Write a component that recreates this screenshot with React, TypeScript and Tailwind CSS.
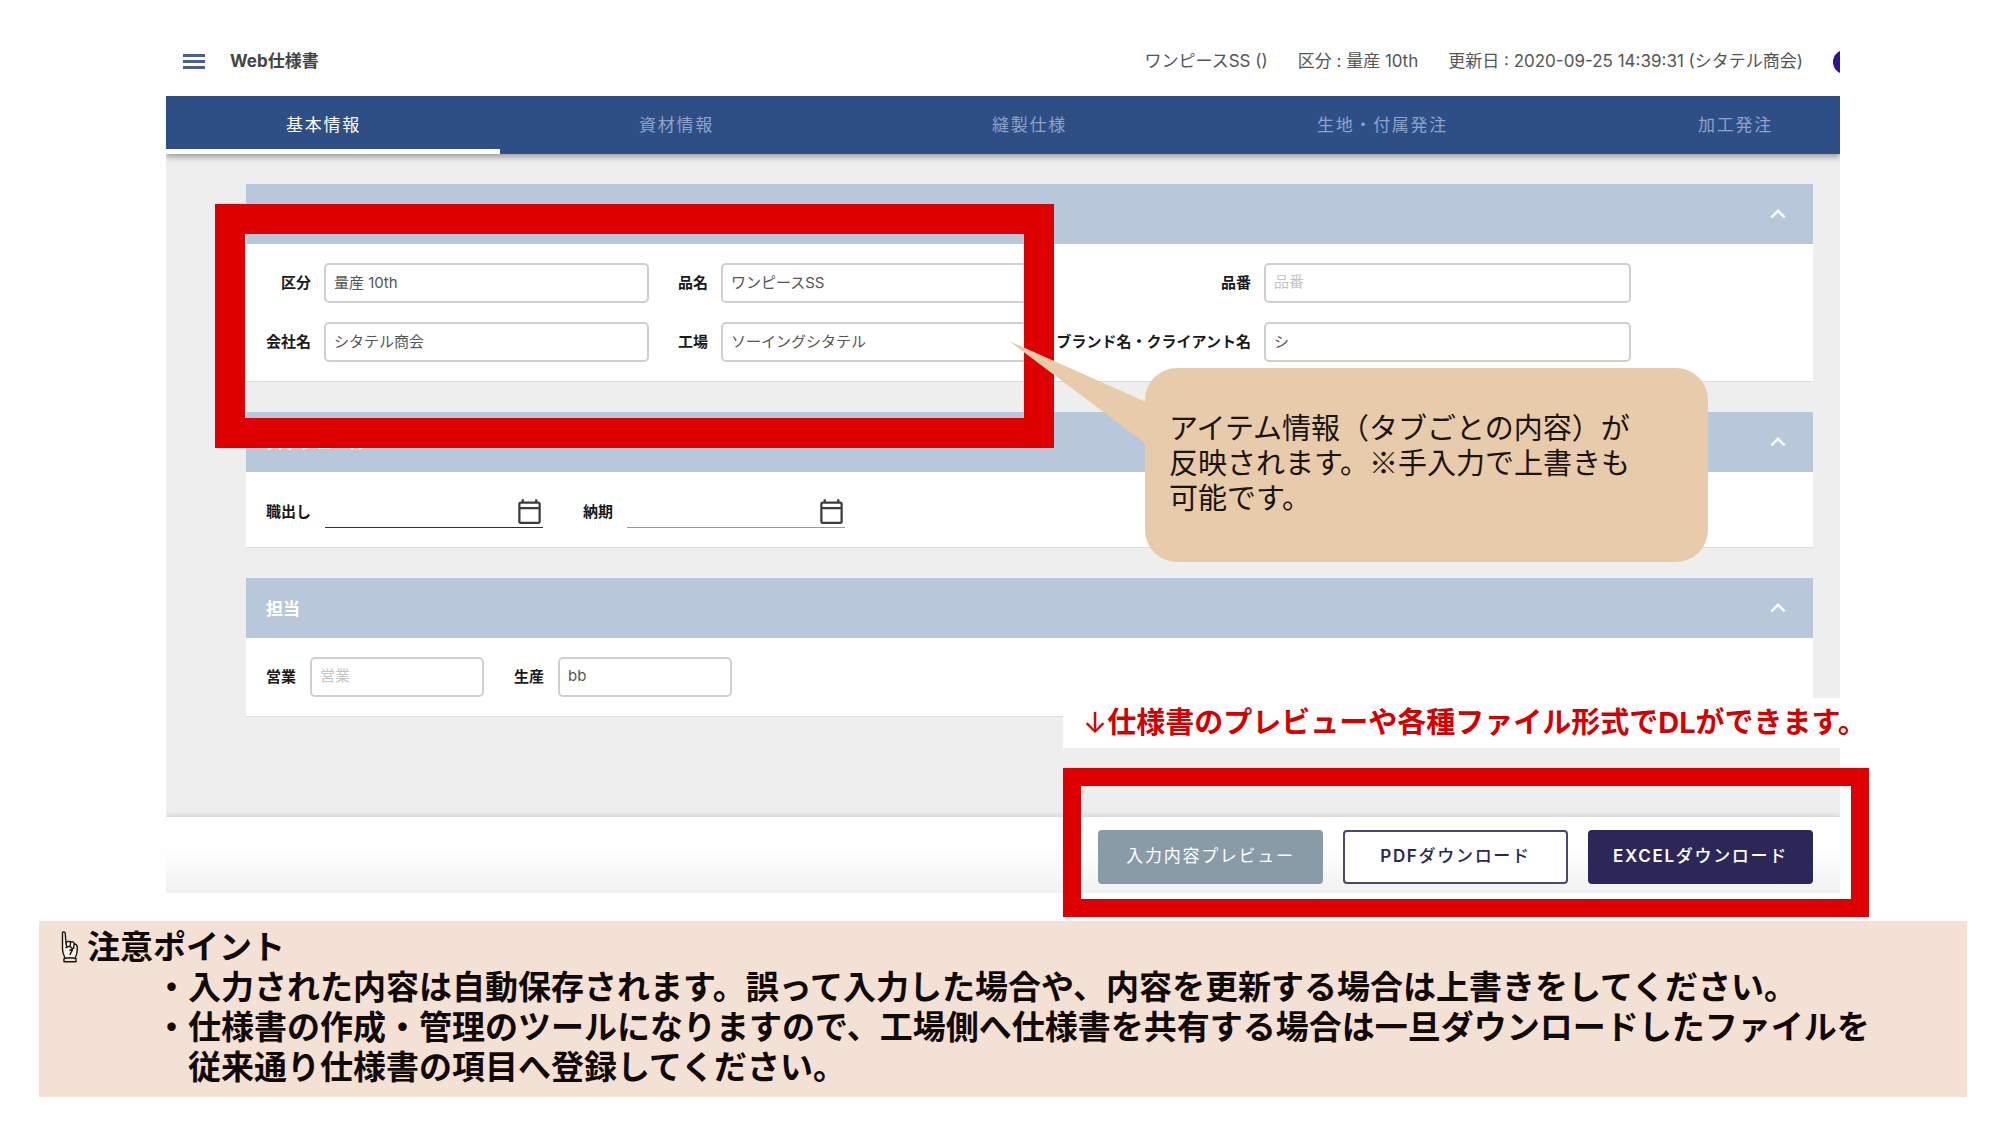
import { useState } from "react";
import type { ReactNode } from "react";
import { MdExpandLess, MdOutlineCalendarToday } from "react-icons/md";

const tabs = ["基本情報", "資材情報", "縫製仕様", "生地・付属発注", "加工発注"];

const labelClass = "text-[15px] font-bold text-[#1a1a1a] whitespace-nowrap text-right";
const inputClass =
  "h-10 w-full min-w-0 rounded-[5px] border-2 border-[#cfcfcf] bg-white px-2 pb-[3px] text-[15px] text-[#555] placeholder:text-[#c4c4c4] outline-none";
const buttonClass = "h-[54px] w-[225px] rounded-[4px] text-[17px] tracking-widest";

function Field({
  id,
  label,
  value,
  placeholder,
}: {
  id: string;
  label: string;
  value?: string;
  placeholder?: string;
}) {
  return (
    <>
      <label htmlFor={id} className={labelClass}>
        {label}
      </label>
      <input id={id} type="text" defaultValue={value} placeholder={placeholder} className={inputClass} />
    </>
  );
}

function DateField({ id, label, line }: { id: string; label: string; line: string }) {
  return (
    <div className="flex items-center gap-[14px]">
      <label htmlFor={id} className={labelClass}>
        {label}
      </label>
      <div className={`flex h-8 w-[218px] items-center border-b ${line}`}>
        <input id={id} type="text" className="min-w-0 flex-1 bg-transparent text-[15px] outline-none" />
        <button type="button" aria-label={`${label} カレンダー`} className="text-[#3c3c3c]">
          <MdOutlineCalendarToday size={27} />
        </button>
      </div>
    </div>
  );
}

function Section({ title, children }: { title?: string; children: ReactNode }) {
  const [open, setOpen] = useState(true);
  return (
    <section className="border-b border-[#dedede] bg-white">
      <div className="flex h-[60px] items-center justify-between bg-[#b9c7da] px-5">
        <h2 className="pt-[3px] text-[17px] font-bold text-white">{title}</h2>
        <button type="button" aria-label="開閉" aria-expanded={open} onClick={() => setOpen(!open)} className="text-white">
          <MdExpandLess size={30} />
        </button>
      </div>
      {open ? children : null}
    </section>
  );
}

function Callout() {
  return (
    <div className="absolute left-[979px] top-[342px] z-20 w-[563px] rounded-[32px] bg-[#e8cbab] px-6 pt-11 pb-[45px] font-['Liberation_Sans','Noto_Sans_CJK_JP',sans-serif]">
      <svg className="absolute -left-[136px] -top-[27px]" width="137" height="103" viewBox="0 0 137 103" aria-hidden="true">
        <path d="M0 0 L137 61 V103 Z" fill="#e8cbab" />
      </svg>
      <p className="text-[29px] leading-[35px] text-[#1c1410]">
        アイテム情報（タブごとの内容）が
        <br />
        反映されます。※手入力で上書きも
        <br />
        可能です。
      </p>
    </div>
  );
}

function PointingHand() {
  return (
    <svg
      width="18"
      height="32"
      viewBox="0 0 18 32"
      fill="none"
      stroke="#1c1410"
      strokeWidth="1.4"
      strokeLinejoin="round"
      aria-hidden="true"
    >
      <path
        fill="#fbf3ee"
        d="M4 27 C2.500 24 1.500 21 1.500 18 V2 C1.500 0.500 4 0.500 4.200 2 L5 12.500 C6 10 8.500 9.500 9.500 11.500 C11 10 13 11 13.200 13 C15.500 12.500 16.500 15 16.300 18 C16.300 22 15.500 24.500 14 27"
      />
      <path d="M5 12.500 L6 17 M9.500 11.500 L9 16 M13.200 13 L12.500 18 M4.500 17 C7 14.500 11 15.500 11.500 18 L8.500 19.500 M11.500 18 C11.500 20.500 9.500 21.500 9 24" />
      <path d="M3 27.500 C7 26.500 11 26.500 15 27.500 V30.800 H3 Z" />
    </svg>
  );
}

export default function App() {
  const [active, setActive] = useState(0);

  return (
    <div className="min-h-screen bg-[#fefefe] pt-[26px] font-[Inter,'Noto_Sans_CJK_JP',sans-serif]">
      <div className="relative ml-[166px] mr-[160px]">
        <header className="flex h-[70px] items-center overflow-hidden pl-[17px] text-[17px]">
          <button type="button" aria-label="メニュー" className="flex w-[22px] flex-col gap-[3px]">
            <span className="h-[3px] bg-[#4a5f92]" />
            <span className="h-[3px] bg-[#4a5f92]" />
            <span className="h-[3px] bg-[#4a5f92]" />
          </button>
          <h1 className="ml-[25px] pt-[2px] font-bold text-[#444]">Web仕様書</h1>
          <div className="ml-auto flex items-center gap-[30px] whitespace-nowrap pt-[2px] text-[#555]">
            <span>ワンピースSS ()</span>
            <span>区分 : 量産 10th</span>
            <span>更新日 : 2020-09-25 14:39:31 (シタテル商会)</span>
            <span className="-mr-[17px] size-6 shrink-0 rounded-full bg-[#2f128c]" />
          </div>
        </header>

        <nav className="bg-[#2d4f86] shadow-[0_3px_6px_rgba(0,0,0,0.35)] [clip-path:inset(0_0_-12px_0)]">
          <div className="-ml-[19px] -mr-[72px] grid grid-cols-5">
            {tabs.map((tab, i) => (
              <button
                key={tab}
                type="button"
                onClick={() => setActive(i)}
                className={`h-[58px] border-b-[5px] pt-[6px] text-[17px] tracking-widest ${
                  i === active ? "border-white text-white" : "border-transparent text-[#8fa3c8]"
                }`}
              >
                {tab}
              </button>
            ))}
          </div>
        </nav>

        <main className="flex flex-col gap-[30px] bg-[#eee] pt-[30px] pr-[27px] pb-[100px] pl-20">
          <Section>
            <div className="grid grid-cols-[45px_325fr_46px_322fr_195px_367fr_149fr] items-center gap-x-[13px] gap-y-[19px] px-5 py-[19px]">
              <Field id="division" label="区分" value="量産 10th" />
              <Field id="item-name" label="品名" value="ワンピースSS" />
              <Field id="item-number" label="品番" placeholder="品番" />
              <span />
              <Field id="company" label="会社名" value="シタテル商会" />
              <Field id="factory" label="工場" value="ソーイングシタテル" />
              <Field id="brand" label="ブランド名・クライアント名" value="シ" />
            </div>
          </Section>

          <Section title="スケジュール">
            <div className="flex gap-10 px-5 pt-6 pb-[19px]">
              <DateField id="start-date" label="職出し" line="border-[#333]" />
              <DateField id="due-date" label="納期" line="border-[#999]" />
            </div>
          </Section>

          <Section title="担当">
            <div className="flex gap-[30px] px-5 py-[19px]">
              <div className="flex w-[218px] items-center gap-[14px]">
                <Field id="sales" label="営業" placeholder="営業" />
              </div>
              <div className="flex w-[218px] items-center gap-[14px]">
                <Field id="production" label="生産" value="bb" />
              </div>
            </div>
          </Section>
        </main>

        <footer className="flex justify-end gap-5 bg-linear-to-b from-white from-40% to-[#f1f1f1] pt-[13px] pr-[27px] pb-[9px] shadow-[0_-2px_5px_rgba(0,0,0,0.1)] [clip-path:inset(-10px_0_0_0)]">
          <button type="button" className={`${buttonClass} bg-[#8a9ba8] text-white`}>
            入力内容プレビュー
          </button>
          <button type="button" className={`${buttonClass} border-2 border-[#4a4870] bg-white font-medium text-[#2b2859]`}>
            <span className="font-semibold">PDF</span>ダウンロード
          </button>
          <button type="button" className={`${buttonClass} bg-[#2b2859] font-medium text-white`}>
            <span className="font-semibold">EXCEL</span>ダウンロード
          </button>
        </footer>

        <div className="pointer-events-none absolute left-[49px] top-[178px] z-10 h-[244px] w-[839px] border-[30px] border-[#de0000]" />
        <div className="pointer-events-none absolute -right-[29px] top-[742px] z-10 h-[149px] w-[806px] border-[18px] border-[#de0000]" />
        <p className="absolute -right-[29px] top-[672px] w-[806px] whitespace-nowrap bg-[#fefefe] pl-5 text-[29px] leading-[50px] font-bold text-[#d40000]">
          <span className="font-normal">↓</span>仕様書のプレビューや各種ファイル形式でDLができます。
        </p>
        <Callout />
      </div>

      <aside className="mt-7 mr-[33px] ml-[39px] bg-[#f3e1d6] pt-[6px] pb-[10px] pl-[22px] text-[33px] leading-10 font-bold text-[#120a08]">
        <h2 className="flex items-center gap-2">
          <PointingHand />
          注意ポイント
        </h2>
        <ul className="pl-[94px]">
          <li className="flex">
            <span>・</span>
            <p>入力された内容は自動保存されます。誤って入力した場合や、内容を更新する場合は上書きをしてください。</p>
          </li>
          <li className="flex">
            <span>・</span>
            <p>
              仕様書の作成・管理のツールになりますので、工場側へ仕様書を共有する場合は一旦ダウンロードしたファイルを
              <br />
              従来通り仕様書の項目へ登録してください。
            </p>
          </li>
        </ul>
      </aside>
    </div>
  );
}
